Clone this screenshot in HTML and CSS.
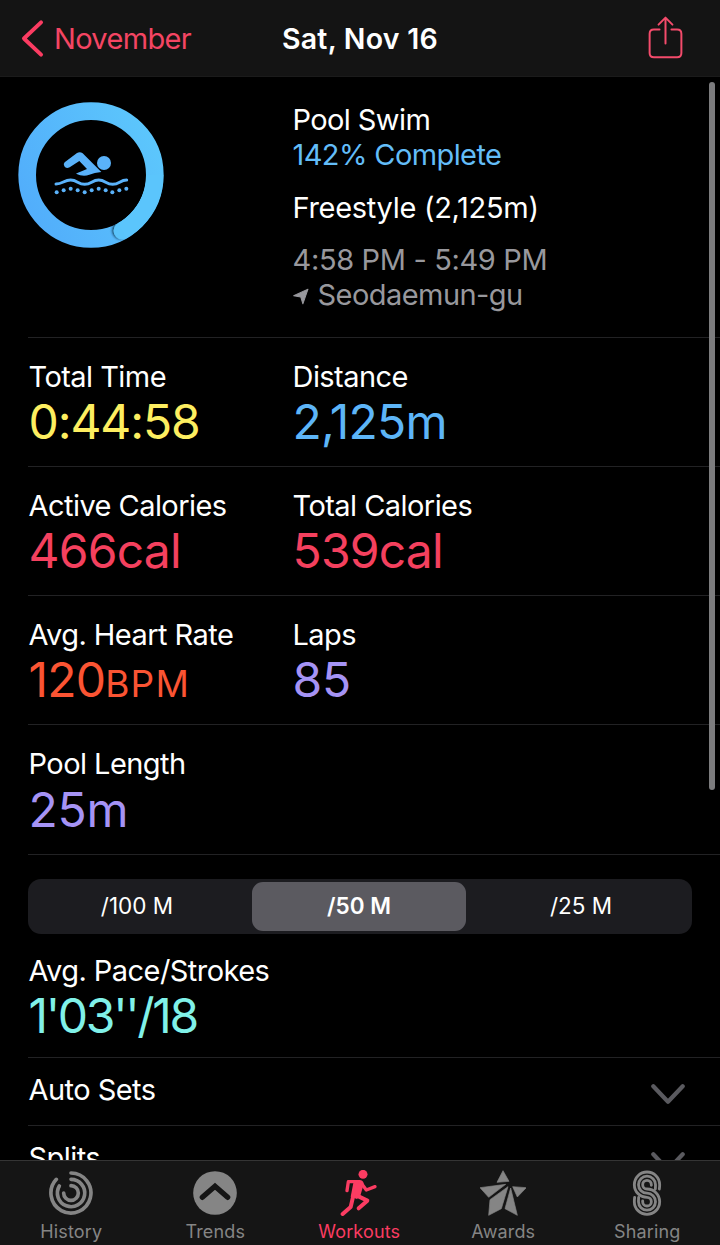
FILE: index.html
```html
<!DOCTYPE html>
<html lang="en">
<head>
<meta charset="utf-8">
<title>Sat, Nov 16</title>
<link rel="stylesheet" href="styles.css">
</head>
<body>
<div class="screen">
  <header class="navbar">
    <a class="back">
      <svg class="back-icon" viewBox="64 58 70 116"><path d="M125 67L73 116L125 165" fill="none" stroke="currentColor" stroke-width="12" stroke-linecap="round" stroke-linejoin="round"/></svg>
      <span class="back-label">November</span>
    </a>
    <h1 class="title">Sat, Nov 16</h1>
    <svg class="share" viewBox="864 46 104 130"><g fill="none" stroke="currentColor" stroke-width="6" stroke-linecap="round" stroke-linejoin="round"><path d="M898 87H881Q868 87 868 100V158Q868 171 881 171H951Q964 171 964 158V100Q964 87 951 87H934"/><path d="M916 129V51M895 72L916 51L937 72"/></g></svg>
  </header>

  <main class="content">
    <section class="hero">
      <svg class="ring" viewBox="54 36 438 438">
        <defs>
          <linearGradient id="ringFill" x1="0" y1="0.75" x2="1" y2="0.25"><stop offset="0" stop-color="#52aefb"/><stop offset="1" stop-color="#5cc6fc"/></linearGradient>
          <filter id="capShadow" x="-50%" y="-50%" width="200%" height="200%"><feDropShadow dx="-4" dy="-1" stdDeviation="3" flood-color="#001a33" flood-opacity=".85"/></filter>
          <clipPath id="band"><path clip-rule="evenodd" d="M55 255a218 218 0 1 0 436 0a218 218 0 1 0 -436 0M108 255a165 165 0 1 0 330 0a165 165 0 1 0 -330 0"/></clipPath>
        </defs>
        <circle cx="273" cy="255" r="191.500" fill="none" stroke="url(#ringFill)" stroke-width="53"/>
        <g clip-path="url(#band)">
          <circle cx="367" cy="422" r="26.500" fill="#5ac4fb" filter="url(#capShadow)"/>
          <path d="M464.500 255A191.500 191.500 0 0 1 367 422" fill="none" stroke="#5bc5fc" stroke-width="53"/>
        </g>
        <g fill="#5ab2fa">
          <circle cx="312" cy="219" r="21"/>
          <path d="M194 217L231 189Q240 184 248 190L304 246Q283 248 268 254Q250 262 228 251Q238 247 261 237L238 213L209 232Q198 237 193 229Q189 222 194 217Z"/>
          <circle cx="170" cy="307" r="6"/><circle cx="191" cy="301" r="6"/><circle cx="212" cy="296" r="6"/><circle cx="233" cy="301" r="6"/><circle cx="254" cy="307" r="6"/><circle cx="275" cy="301" r="6"/><circle cx="296" cy="296" r="6"/><circle cx="317" cy="301" r="6"/><circle cx="337" cy="307" r="6"/><circle cx="358" cy="301" r="6"/><circle cx="379" cy="296" r="6"/>
        </g>
        <path d="M168 282C188 282 192 270 212 270S234 283 254 283S276 270 296 270S318 283 338 283S360 270 380 270" fill="none" stroke="#5ab2fa" stroke-width="9" stroke-linecap="round"/>
      </svg>
      <div class="summary">
        <p class="line name">Pool Swim</p>
        <p class="line complete">142% Complete</p>
        <p class="line stroke-type">Freestyle (2,125m)</p>
        <p class="line when">4:58 PM - 5:49 PM</p>
        <p class="line place"><svg class="pin" viewBox="68 595 47 49"><path d="M112 598L97 641L91 621L70 617Z" fill="currentColor" stroke="currentColor" stroke-width="3" stroke-linejoin="round"/></svg>Seodaemun-gu</p>
      </div>
    </section>

    <section class="metrics">
      <div class="metric-row">
        <div class="metric"><span class="label">Total Time</span><span class="value yellow">0:44:58</span></div>
        <div class="metric"><span class="label">Distance</span><span class="value blue">2,125m</span></div>
      </div>
      <div class="metric-row">
        <div class="metric"><span class="label">Active Calories</span><span class="value red">466cal</span></div>
        <div class="metric"><span class="label">Total Calories</span><span class="value red">539cal</span></div>
      </div>
      <div class="metric-row">
        <div class="metric"><span class="label">Avg. Heart Rate</span><span class="value orange">120<span class="unit">BPM</span></span></div>
        <div class="metric"><span class="label">Laps</span><span class="value purple">85</span></div>
      </div>
      <div class="metric-row">
        <div class="metric"><span class="label">Pool Length</span><span class="value purple">25m</span></div>
      </div>
    </section>

    <section class="pace">
      <div class="segments">
        <span class="segment">/100 M</span>
        <span class="segment selected">/50 M</span>
        <span class="segment">/25 M</span>
      </div>
      <div class="metric"><span class="label">Avg. Pace/Strokes</span><span class="value teal">1'03''/18</span></div>
    </section>

    <section class="details">
      <div class="detail"><span class="label">Auto Sets</span><svg class="chevron" viewBox="0 0 34 22"><path d="M2.300 3.300L17 18.700L31.700 3.300" fill="none" stroke="currentColor" stroke-width="4.200" stroke-linecap="round" stroke-linejoin="round"/></svg></div>
      <div class="detail"><span class="label">Splits</span><svg class="chevron" viewBox="0 0 34 22"><path d="M2.300 3.300L17 18.700L31.700 3.300" fill="none" stroke="currentColor" stroke-width="4.200" stroke-linecap="round" stroke-linejoin="round"/></svg></div>
    </section>
    <div class="scrollbar"></div>
  </main>

  <nav class="tabbar">
    <a class="tab">
      <svg class="tab-icon" viewBox="145 330 138 138"><g fill="none" stroke="currentColor" stroke-width="11" stroke-linecap="round"><path d="M214 339A60 60 0 1 1 170 358"/><path d="M214 358A41 41 0 1 1 179 378"/><path d="M214 377A22 22 0 1 1 192 399"/></g></svg>
      <span class="tab-label">History</span>
    </a>
    <a class="tab">
      <svg class="tab-icon" viewBox="579 329 138 138"><circle cx="648" cy="398" r="65.500" fill="currentColor"/><path d="M610 411L648 378L686 411" fill="none" stroke="#151515" stroke-width="16" stroke-linecap="round"/></svg>
      <span class="tab-label">Trends</span>
    </a>
    <a class="tab active">
      <svg class="tab-icon" viewBox="140 149 138 138"><circle cx="221" cy="162" r="13.500" fill="currentColor"/><path d="M180 179H212Q224 181 223 192L213 226L203 236L184 229L192 188Z" fill="currentColor"/><g fill="none" stroke="currentColor" stroke-width="10" stroke-linecap="round" stroke-linejoin="round"><path d="M173 211L177 184H205"/><path d="M217 190L231 209L257 199"/><path d="M203 226L234 241L208 264" stroke-width="12"/><path d="M192 226L184 260L160 281" stroke-width="12"/></g></svg>
      <span class="tab-label">Workouts</span>
    </a>
    <a class="tab">
      <svg class="tab-icon" viewBox="571 152 138 138"><g fill="currentColor" stroke="currentColor" stroke-width="2" stroke-linejoin="round"><path d="M640 154L658 186L622 189Z"/><path d="M571 205L648 195L597 234Z"/><path d="M655 202L601 241L597 288L635 268Z"/><path d="M663 206L646 268L683 288Z"/><path d="M669 202L710 205L683 233Z"/></g></svg>
      <span class="tab-label">Awards</span>
    </a>
    <a class="tab">
      <svg class="tab-icon" viewBox="1002 150 138 138"><g fill="none" stroke="currentColor" stroke-width="8.500" stroke-linecap="round"><path d="M1108 207Q1109 200 1109 194A38 38 0 0 0 1033 194A38 38 0 0 0 1071 232A13 13 0 0 1 1084 245A13 13 0 0 1 1058 245V243"/><path d="M1096 207Q1096.500 200 1096.500 194A25.500 25.500 0 0 0 1045.500 194A25.500 25.500 0 0 0 1071 219.500A25.500 25.500 0 0 1 1096.500 245A25.500 25.500 0 0 1 1045.500 245Q1045.500 238 1046 232"/><path d="M1084 196V194A13 13 0 0 0 1058 194A13 13 0 0 0 1071 207A38 38 0 0 1 1109 245A38 38 0 0 1 1033 245Q1033 238 1034 232"/></g></svg>
      <span class="tab-label">Sharing</span>
    </a>
  </nav>
</div>
</body>
</html>
```
FILE: styles.css
```css
* { box-sizing: border-box; }
body { margin: 0; background: #000; }
.screen {
  display: flex;
  flex-direction: column;
  width: 720px;
  height: 1245px;
  overflow: hidden;
  background: #000;
  color: #fff;
  font-family: Inter, "Liberation Sans", sans-serif;
  font-size: 29px;
  line-height: 36px;
}
.navbar {
  flex: none;
  display: grid;
  grid-template-columns: 1fr auto 1fr;
  align-items: center;
  height: 77px;
  padding: 1px 21px 0;
  background: #141414;
  border-bottom: 1px solid #1b1b1b;
}
.back { display: flex; align-items: center; gap: 10px; color: #f44563; }
.back-icon { width: 23px; height: 39px; color: #fb3c62; }
.back-label { letter-spacing: -0.65px; }
.title { margin: 0; font-size: 28.500px; font-weight: 600; letter-spacing: 0.25px; }
.share { justify-self: end; width: 35px; height: 43px; margin: 0 16px 2px 0; color: #f44b6b; }

.content { position: relative; flex: 1; min-height: 0; overflow: hidden; }
.hero {
  display: grid;
  grid-template-columns: 274.500px 1fr;
  height: 259.500px;
  padding: 25px 0 0 18px;
}
.ring { width: 146px; height: 146px; }
.summary { margin-top: -0.4px; }
.line { margin: 0; line-height: 35.200px; letter-spacing: -0.6px; }
.complete { color: #63bdf8; }
.stroke-type { margin: 17.500px 0; letter-spacing: -0.3px; }
.when, .place { color: #98989d; }
.when { letter-spacing: -0.35px; }
.place { display: flex; align-items: center; gap: 9px; letter-spacing: -0.55px; }
.pin { width: 16px; height: 17px; margin-top: 3px; }

.metric-row {
  display: grid;
  grid-template-columns: 264px 1fr;
  height: 129.330px;
  margin-left: 28px;
  padding: 21px 0 0 0.5px;
  border-top: 1px solid #222224;
}
.metric { display: flex; flex-direction: column; }
.label { letter-spacing: -0.55px; }
.value { margin-top: -0.7px; font-size: 48px; font-weight: 370; line-height: 56px; letter-spacing: -0.8px; }
.unit { font-size: 37px; font-weight: 430; letter-spacing: 1.200px; }
.yellow { color: #fdee60; letter-spacing: -1.100px; }
.blue { color: #5db5f8; }
.red { color: #f4405e; }
.orange { color: #fb5433; }
.purple { color: #a593f5; letter-spacing: -0.2px; }
.teal { color: #80f1e9; letter-spacing: -2.300px; }

.pace {
  height: 202.700px;
  margin-left: 28px;
  padding-top: 24px;
  border-top: 1px solid #222224;
}
.segments {
  display: grid;
  grid-template-columns: 218px 220px 218px;
  justify-content: space-between;
  width: 664px;
  height: 55px;
  margin-bottom: 19px;
  padding: 3px 2px 3px 0;
  border-radius: 13px;
  background: #1c1c20;
}
.segment {
  display: flex;
  align-items: center;
  justify-content: center;
  border-radius: 11px;
  font-size: 22.500px;
}
.selected { margin: 0 3px; background: #5b5a60; font-weight: 600; }
.pace .metric { padding-left: 0.5px; }

.detail {
  display: flex;
  align-items: center;
  justify-content: space-between;
  height: 68px;
  margin-left: 28px;
  padding: 0 35.500px 2px 0.5px;
  border-top: 1px solid #222224;
}
.chevron { width: 34px; height: 22px; margin-top: 8px; color: #5a5a5f; }
.scrollbar {
  position: absolute;
  top: 5px;
  right: 5px;
  width: 6px;
  height: 708px;
  border-radius: 3px;
  background: #7c7c7e;
}

.tabbar {
  flex: none;
  display: grid;
  grid-template-columns: repeat(5, 144px);
  height: 85px;
  border-top: 1px solid #343434;
  background: #151515;
}
.tab {
  display: flex;
  flex-direction: column;
  align-items: center;
  padding: 9px 1.500px 0 0;
  color: #858585;
}
.tab-icon { width: 46px; height: 46px; }
.tab-label { margin-top: 5px; font-size: 18px; line-height: 22px; letter-spacing: 0.15px; }
.active { color: #fb3c62; }
```
